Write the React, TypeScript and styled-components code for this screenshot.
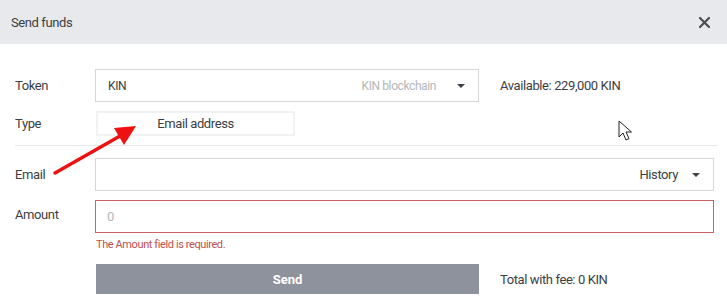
import styled, { createGlobalStyle } from 'styled-components';

const GlobalStyle = createGlobalStyle`
  html, body {
    margin: 0;
    padding: 0;
    background: #ffffff;
  }
  body {
    font-family: Roboto, 'Noto Sans', sans-serif;
    letter-spacing: -0.4px;
    color: #3b3e44;
  }
`;

const Caret = () => (
  <svg width="8" height="4" viewBox="0 0 8 4">
    <path d="M0 0 L8 0 L4 4 Z" fill="#3b3e44" />
  </svg>
);

const App = () => {
  return (
    <>
      <GlobalStyle />
      <Modal>
        <Header>
          <HeaderTitle>Send funds</HeaderTitle>
          <CloseButton type="button" aria-label="Close">
            <svg width="13" height="13" viewBox="0 0 13 13">
              <path d="M2 2 L11 11 M11 2 L2 11" stroke="#4a4d53" strokeWidth="2.2" strokeLinecap="round" />
            </svg>
          </CloseButton>
        </Header>

        <Body>
          <Row>
            <Label>Token</Label>
            <Select $width={384}>
              <SelectValue>KIN</SelectValue>
              <SelectHint>KIN blockchain</SelectHint>
              <Caret />
            </Select>
            <SideText>Available: 229,000 KIN</SideText>
          </Row>

          <TypeRow>
            <Label>Type</Label>
            <TypeBox>Email address</TypeBox>
          </TypeRow>

          <Divider />

          <Row>
            <Label>Email</Label>
            <Select $width={619}>
              <SelectValue />
              <HistoryText>History</HistoryText>
              <Caret />
            </Select>
          </Row>

          <AmountRow>
            <AmountLabel>Amount</AmountLabel>
            <AmountField>
              <AmountInput placeholder="0" />
              <ErrorText>The Amount field is required.</ErrorText>
            </AmountField>
          </AmountRow>

          <SendRow>
            <SendButton type="button">Send</SendButton>
            <SideText>Total with fee: 0 KIN</SideText>
          </SendRow>
        </Body>

        <Annotation width="90" height="56" viewBox="0 0 90 56">
          <path d="M3 52 L68 15" stroke="#ee1111" strokeWidth="3.4" strokeLinecap="round" />
          <path d="M84 5 L62 7 L72 24 Z" fill="#ee1111" />
        </Annotation>

        <Pointer width="16" height="22" viewBox="0 0 16 22">
          <path
            d="M1 1 L1 17 L5 13 L8 20 L11 18.7 L8 12 L13.5 12 Z"
            fill="#ffffff"
            stroke="#222222"
            strokeWidth="1"
            strokeLinejoin="round"
          />
        </Pointer>
      </Modal>
    </>
  );
};

const Modal = styled.div`
  position: relative;
  width: 727px;
  height: 306px;
  overflow: hidden;
  background: #ffffff;
`;

const Header = styled.div`
  height: 44px;
  display: flex;
  align-items: center;
  justify-content: space-between;
  padding: 0 13px 0 11px;
  background: #e8e9ec;
`;

const HeaderTitle = styled.h2`
  margin: 0;
  font-size: 13px;
  font-weight: 400;
  color: #3b3e44;
`;

const CloseButton = styled.button`
  display: flex;
  align-items: center;
  justify-content: center;
  width: 20px;
  height: 20px;
  padding: 0;
  border: none;
  background: transparent;
`;

const Body = styled.div`
  padding: 25px 13px 0 15px;
  display: flex;
  flex-direction: column;
`;

const Row = styled.div`
  display: flex;
  align-items: center;
  height: 33px;
  margin-bottom: 9px;
`;

const TypeRow = styled(Row)`
  height: 25px;
  margin-bottom: 9px;
`;

const AmountRow = styled.div`
  display: flex;
  align-items: flex-start;
`;

const Label = styled.span`
  width: 80px;
  flex-shrink: 0;
  font-size: 13px;
  color: #3b3e44;
`;

const AmountLabel = styled(Label)`
  line-height: 29px;
`;

const Select = styled.div<{ $width: number }>`
  box-sizing: border-box;
  width: ${(p) => p.$width}px;
  height: 33px;
  display: flex;
  align-items: center;
  padding: 0 13px 0 12px;
  border: 1px solid #d6d7da;
  background: #ffffff;

  svg {
    margin-left: 18px;
  }
`;

const SelectValue = styled.span`
  flex: 1;
  font-size: 12px;
  color: #3b3e44;
`;

const SelectHint = styled.span`
  font-size: 12px;
  color: #b5b7bb;
  margin-right: 3px;
`;

const HistoryText = styled.span`
  font-size: 13px;
  color: #3b3e44;
  margin-right: -4px;
`;

const SideText = styled.span`
  margin-left: 21px;
  font-size: 13px;
  color: #3b3e44;
`;

const TypeBox = styled.div`
  box-sizing: border-box;
  width: 199px;
  height: 25px;
  margin-left: 1px;
  display: flex;
  align-items: center;
  justify-content: center;
  border: 2px solid #f1f2f4;
  font-size: 13px;
  color: #3b3e44;
`;

const Divider = styled.hr`
  margin: 0 0 12px;
  border: none;
  border-top: 1px solid #e6e7ea;
  width: 703px;
`;

const AmountField = styled.div`
  display: flex;
  flex-direction: column;
`;

const AmountInput = styled.input`
  box-sizing: border-box;
  width: 619px;
  height: 33px;
  padding: 0 11px;
  border: 1px solid #c86461;
  border-radius: 0;
  outline: none;
  font-family: inherit;
  font-size: 13px;
  color: #3b3e44;

  &::placeholder {
    color: #b5b7bb;
  }
`;

const ErrorText = styled.span`
  margin-top: 5px;
  margin-left: 1px;
  font-size: 11px;
  color: #c0504d;
`;

const SendRow = styled.div`
  display: flex;
  align-items: center;
  margin-top: 13px;
  padding-left: 81px;
`;

const SendButton = styled.button`
  width: 383px;
  height: 30px;
  border: none;
  background: #8e929c;
  color: #ffffff;
  font-family: inherit;
  font-size: 13px;
  font-weight: 700;
`;

const Annotation = styled.svg`
  position: absolute;
  left: 52px;
  top: 121px;
`;

const Pointer = styled.svg`
  position: absolute;
  left: 618px;
  top: 120px;
`;

export default App;
